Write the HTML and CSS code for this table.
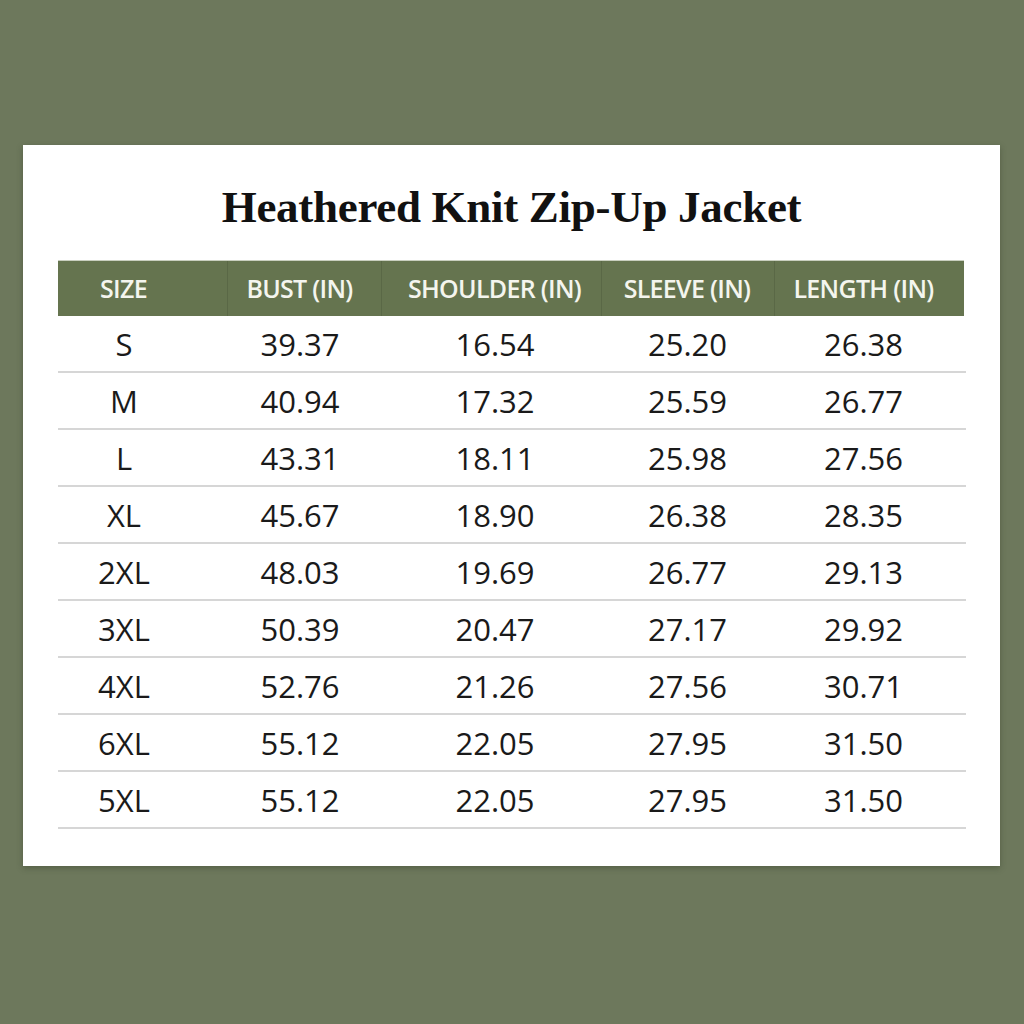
FILE: index.html
```html
<!DOCTYPE html>
<html>
<head>
<meta charset="utf-8">
<link rel="stylesheet" href="styles.css">
</head>
<body>
<div class="card">
  <h1 class="title">Heathered Knit Zip-Up Jacket</h1>
  <div class="table">
    <div class="row head">
      <div class="c c1">SIZE</div>
      <div class="c c2">BUST (IN)</div>
      <div class="c c3">SHOULDER (IN)</div>
      <div class="c c4">SLEEVE (IN)</div>
      <div class="c c5">LENGTH (IN)</div>
    </div>
    <div class="row"><div class="c c1">S</div><div class="c c2">39.37</div><div class="c c3">16.54</div><div class="c c4">25.20</div><div class="c c5">26.38</div></div>
    <div class="row"><div class="c c1">M</div><div class="c c2">40.94</div><div class="c c3">17.32</div><div class="c c4">25.59</div><div class="c c5">26.77</div></div>
    <div class="row"><div class="c c1">L</div><div class="c c2">43.31</div><div class="c c3">18.11</div><div class="c c4">25.98</div><div class="c c5">27.56</div></div>
    <div class="row"><div class="c c1">XL</div><div class="c c2">45.67</div><div class="c c3">18.90</div><div class="c c4">26.38</div><div class="c c5">28.35</div></div>
    <div class="row"><div class="c c1">2XL</div><div class="c c2">48.03</div><div class="c c3">19.69</div><div class="c c4">26.77</div><div class="c c5">29.13</div></div>
    <div class="row"><div class="c c1">3XL</div><div class="c c2">50.39</div><div class="c c3">20.47</div><div class="c c4">27.17</div><div class="c c5">29.92</div></div>
    <div class="row"><div class="c c1">4XL</div><div class="c c2">52.76</div><div class="c c3">21.26</div><div class="c c4">27.56</div><div class="c c5">30.71</div></div>
    <div class="row"><div class="c c1">6XL</div><div class="c c2">55.12</div><div class="c c3">22.05</div><div class="c c4">27.95</div><div class="c c5">31.50</div></div>
    <div class="row"><div class="c c1">5XL</div><div class="c c2">55.12</div><div class="c c3">22.05</div><div class="c c4">27.95</div><div class="c c5">31.50</div></div>
  </div>
</div>
</body>
</html>
```
FILE: styles.css
```css
html, body {
  margin: 0;
  padding: 0;
}
body {
  width: 1024px;
  height: 1024px;
  background: #6d785c;
  padding: 145px 0 0 23px;
  box-sizing: border-box;
  font-family: "Open Sans", "Noto Sans", sans-serif;
}
.card {
  width: 977px;
  height: 721px;
  background: #ffffff;
  box-sizing: border-box;
  padding: 30px 0 0 35px;
  box-shadow: 0 2px 6px rgba(40, 50, 30, 0.35);
}
.title {
  margin: 0 35px 0 0;
  height: 85px;
  text-align: center;
  font-family: "Liberation Serif", "Times New Roman", serif;
  font-weight: bold;
  font-size: 45px;
  line-height: 64px;
  color: #111111;
  letter-spacing: -0.3px;
}
.table {
  width: 908px;
}
.row {
  display: grid;
  grid-template-columns: 170px 154px 220px 173px 191px;
  height: 55px;
  border-bottom: 2px solid #d6d6d6;
  align-items: center;
  font-size: 31px;
  color: #1a1a1a;
}
.row.head {
  background: #65744f;
  color: #f4f5ee;
  font-size: 25px;
  font-weight: 600;
  border-bottom: 0;
  border-top: 1px solid #c9cfbf;
  width: 906px;
  letter-spacing: -0.7px;
}
.row.head .c {
  height: 55px;
  line-height: 55px;
  border-right: 1px solid #5a6846;
}
.row.head .c5 {
  border-right: 0;
}
.c {
  text-align: center;
  white-space: nowrap;
}
.c1 { padding-right: 38px; }
.c2 { padding-right: 10px; }
.c3 { padding-left: 6px; }
.c4 { padding-right: 2px; }
.c5 { padding-right: 14px; }
```
